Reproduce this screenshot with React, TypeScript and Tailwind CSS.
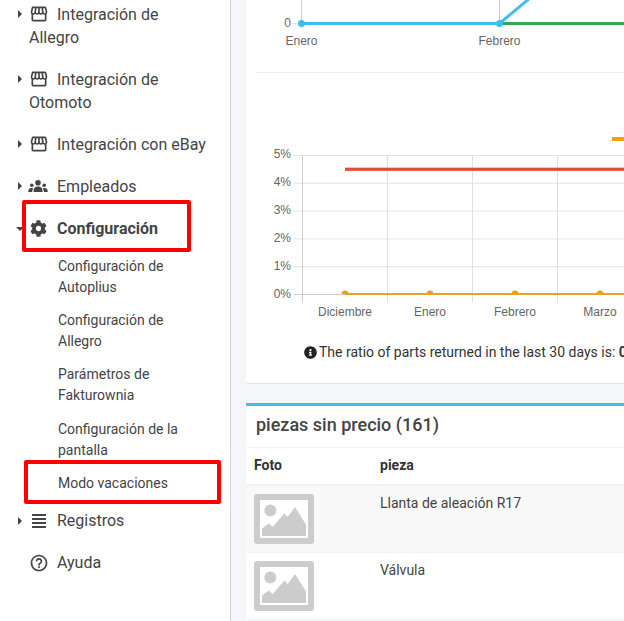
import React from 'react';
import { FaAlignJustify, FaCog, FaInfoCircle } from 'react-icons/fa';
import { MdHelpOutline, MdOutlineStorefront } from 'react-icons/md';

const Caret = ({ open }: { open?: boolean }) =>
    open ? (
        <span className="absolute left-[16px] top-[20px] w-0 h-0 border-x-[4px] border-x-transparent border-t-[4px] border-t-[#444]" />
    ) : (
        <span className="absolute left-[18px] top-[17px] w-0 h-0 border-y-[4px] border-y-transparent border-l-[4px] border-l-[#444]" />
    );

interface NavItemProps {
    icon: React.ReactNode;
    label: string;
    caret?: 'open' | 'closed';
    bold?: boolean;
}

const NavItem = ({ icon, label, caret, bold }: NavItemProps) => (
    <div className={`relative pl-[29px] pr-[20px] py-[9.5px] text-[16px] leading-[23px] text-[#444] ${bold ? 'font-bold' : ''}`}>
        {caret && <Caret open={caret === 'open'} />}
        <span className="inline-flex w-[28px] h-[23px] items-center align-top">{icon}</span>
        {label}
    </div>
);

const SubItem = ({ label, cls }: { label: string; cls?: string }) => (
    <div className={`pl-[58px] pr-[20px] text-[14px] leading-[21px] text-[#444] ${cls ?? ''}`}>{label}</div>
);

const UsersIcon = () => (
    <svg width="20" height="12" viewBox="0 0 20 12" fill="#444" className="-ml-[1px]">
        <circle cx="10" cy="2.8" r="2.8" />
        <path d="M5.5 12 C5.5 8 7 6.5 10 6.5 C13 6.5 14.5 8 14.5 12 Z" />
        <circle cx="3.8" cy="5.2" r="1.8" />
        <circle cx="16.2" cy="5.2" r="1.8" />
        <path d="M0.3 12 C0.3 9 1.3 8 3.3 8 C4.3 8 4.8 8.3 5.3 8.7 C4.6 9.5 4.2 10.5 4.2 12 Z" />
        <path d="M19.7 12 C19.7 9 18.7 8 16.7 8 C15.7 8 15.2 8.3 14.7 8.7 C15.4 9.5 15.8 10.5 15.8 12 Z" />
    </svg>
);

const Placeholder = () => (
    <svg width="60" height="50" viewBox="0 0 60 50" className="block">
        <rect width="60" height="50" rx="3" fill="#ccc" />
        <rect x="6" y="6" width="48" height="38" fill="#fff" />
        <circle cx="16.3" cy="16.6" r="6" fill="#ccc" />
        <path d="M8 42 L8 34.6 L14.7 29.6 L18.7 33 L30.3 19.6 L33.7 23 L41 13 L52 30.6 L52 42 Z" fill="#ccc" />
    </svg>
);

// viewBox uses page coordinates, the card starts at x=246
const TopChart = () => (
    <svg width="378" height="72" viewBox="246 0 378 72" className="block font-['Liberation_Sans',sans-serif]">
        <line x1="301.5" y1="0" x2="301.5" y2="23" stroke="#ccc" />
        <line x1="499.5" y1="0" x2="499.5" y2="23" stroke="#ccc" />
        <line x1="292" y1="23.5" x2="301" y2="23.5" stroke="#e4e4e4" />
        <line x1="499" y1="23.5" x2="624" y2="23.5" stroke="#34a853" strokeWidth="3" />
        <path d="M301.5 23.5 L499.5 23.5 L536 -7" fill="none" stroke="#3fbdee" strokeWidth="3" />
        <circle cx="301.5" cy="23.5" r="3.5" fill="#3fbdee" />
        <circle cx="499.5" cy="23.5" r="3.5" fill="#3fbdee" />
        <text x="291" y="27" textAnchor="end" fontSize="12" fill="#666">0</text>
        <text x="301.5" y="45" textAnchor="middle" fontSize="12" fill="#666">Enero</text>
        <text x="499.5" y="45" textAnchor="middle" fontSize="12" fill="#666">Febrero</text>
    </svg>
);

const ReturnsChart = () => {
    const ticks = ['5%', '4%', '3%', '2%', '1%', '0%'];
    const months = [
        { x: 345, label: 'Diciembre' },
        { x: 430, label: 'Enero' },
        { x: 515, label: 'Febrero' },
        { x: 600, label: 'Marzo' },
    ];
    return (
        <svg width="378" height="190" viewBox="246 130 378 190" className="block font-['Liberation_Sans',sans-serif]">
            {ticks.map((t, i) => (
                <g key={t}>
                    <line x1="294" y1={155.5 + i * 27.8} x2="624" y2={155.5 + i * 27.8} stroke="#e4e4e4" />
                    <text x="291" y={157.5 + i * 28} textAnchor="end" fontSize="12" fill="#666">
                        {t}
                    </text>
                </g>
            ))}
            {[302.5, 387.5, 472.5, 557.5].map((x, i) => (
                <line key={x} x1={x} y1="155" x2={x} y2="302" stroke={i === 0 ? '#ccc' : '#e0e0e0'} />
            ))}
            <line x1="294" y1="294.5" x2="624" y2="294.5" stroke="#ccc" />
            <rect x="345" y="167.5" width="279" height="3.5" fill="#e8867a" />
            <rect x="345" y="168" width="279" height="2.5" fill="#dd4b39" />
            <rect x="612" y="137" width="12" height="4" fill="#f39c12" />
            {months.map((m) => (
                <path key={m.x} d={`M${m.x - 3.5} 294 A3.5 3.5 0 0 1 ${m.x + 3.5} 294 Z`} fill="#f39c12" />
            ))}
            <rect x="345" y="293" width="279" height="2" fill="#e5a32a" />
            {months.map((m) => (
                <text key={m.label} x={m.x} y="316" textAnchor="middle" fontSize="12" fill="#666">
                    {m.label}
                </text>
            ))}
        </svg>
    );
};

export default function App() {
    return (
        <div className="relative flex w-[624px] h-[621px] overflow-hidden bg-[#f4f6f9] font-['Roboto',sans-serif]">
            <aside className="w-[231px] shrink-0 h-full bg-white border-r border-[#d2d6de]">
                <div className="-mt-[7px]">
                    <NavItem caret="closed" label="Integración de Allegro" icon={<MdOutlineStorefront size={20} />} />
                    <NavItem caret="closed" label="Integración de Otomoto" icon={<MdOutlineStorefront size={20} />} />
                    <NavItem caret="closed" label="Integración con eBay" icon={<MdOutlineStorefront size={20} />} />
                    <NavItem caret="closed" label="Empleados" icon={<UsersIcon />} />
                    <NavItem caret="open" bold label="Configuración" icon={<FaCog size={17} className="ml-[1px]" />} />
                    <div className="pt-[7px]">
                        <SubItem label="Configuración de Autoplius" cls="pb-[12px]" />
                        <SubItem label="Configuración de Allegro" cls="pb-[12px]" />
                        <SubItem label="Parámetros de Fakturownia" cls="pb-[13px]" />
                        <SubItem label="Configuración de la pantalla" cls="pb-[12px]" />
                        <SubItem label="Modo vacaciones" cls="pb-[5.5px]" />
                    </div>
                    <NavItem caret="closed" label="Registros" icon={<FaAlignJustify size={16} className="ml-[2px]" />} />
                    <NavItem label="Ayuda" icon={<MdHelpOutline size={20} />} />
                </div>
            </aside>

            <main className="flex-1 min-w-0 pl-[15px]">
                <section className="w-[500px] h-[384px] bg-white rounded-b-[3px] border-b border-[#e3e5ea]">
                    <TopChart />
                    <div className="ml-[10px] border-t border-[#eee]" />
                    <div className="pt-[57px]">
                        <ReturnsChart />
                    </div>
                    <div className="pl-[58px] pt-[22px] flex items-center gap-[2px] text-[14px] leading-5 text-[#333] whitespace-nowrap">
                        <FaInfoCircle size={13} className="text-[#222]" />
                        <span>
                            The ratio of parts returned in the last 30 days is: <b>0.00%</b>
                        </span>
                    </div>
                </section>

                <section className="mt-[19px] w-[500px] bg-white border-t-[3px] border-[#3fbdee]">
                    <h3 className="pl-[10px] pb-[4px] h-[42px] flex items-center text-[18px] font-medium text-[#444] border-b border-[#f4f4f4]">
                        piezas sin precio (161)
                    </h3>
                    <div className="flex h-[38px] pb-[2px] items-center border-b-2 border-[#f4f4f4] text-[14px] font-bold text-[#333]">
                        <div className="w-[126px] pl-[8px]">Foto</div>
                        <div className="pl-[8px]">pieza</div>
                    </div>
                    <div className="flex bg-[#f9f9f9] border-b border-[#f4f4f4] text-[14px] leading-5 text-[#444]">
                        <div className="w-[126px] p-[8px]">
                            <Placeholder />
                        </div>
                        <div className="px-[8px] pt-[7px]">Llanta de aleación R17</div>
                    </div>
                    <div className="flex border-b border-[#f4f4f4] text-[14px] leading-5 text-[#444]">
                        <div className="w-[126px] p-[8px]">
                            <Placeholder />
                        </div>
                        <div className="px-[8px] pt-[7px]">Válvula</div>
                    </div>
                </section>
            </main>

            <div className="absolute left-[22px] top-[200px] w-[169px] h-[52px] border-[4px] border-[#f00] rounded-[2px]" />
            <div className="absolute left-[24px] top-[460px] w-[197px] h-[44px] border-[4px] border-[#f00] rounded-[2px]" />
        </div>
    );
}
